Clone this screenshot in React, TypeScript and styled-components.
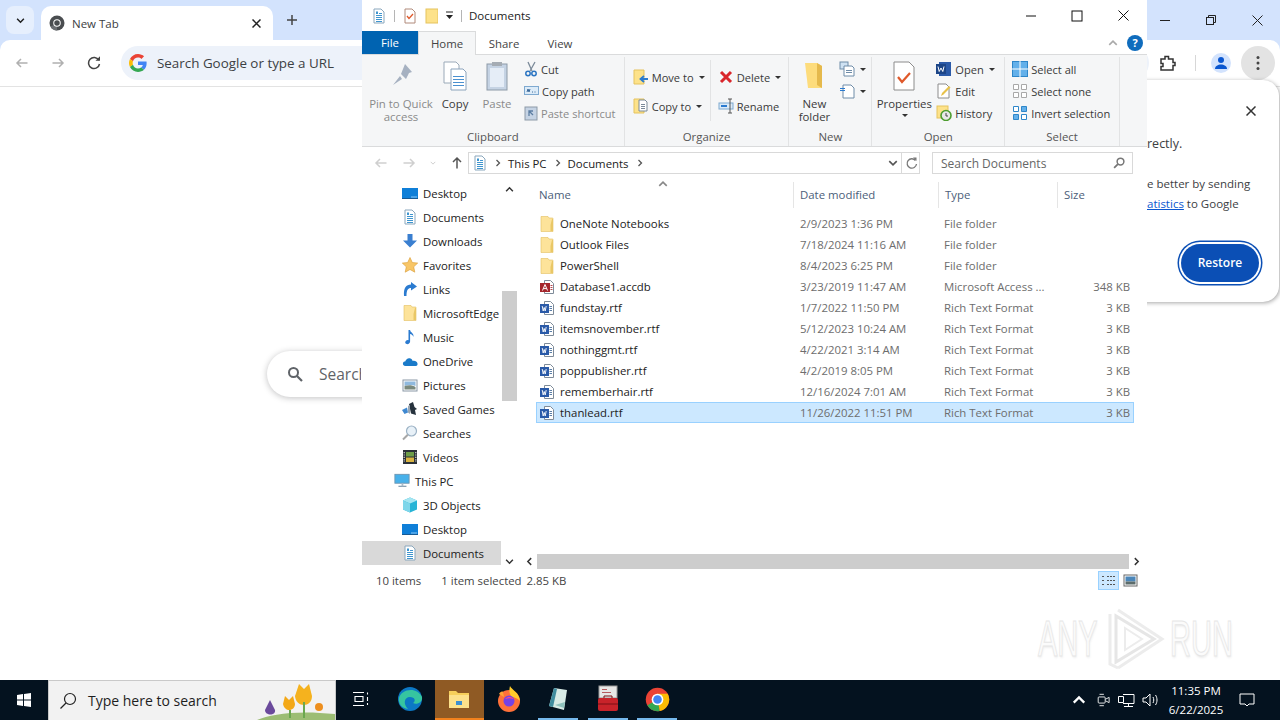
import React from "react";
import styled, { createGlobalStyle } from "styled-components";

const GlobalStyle = createGlobalStyle`
  html, body { margin: 0; padding: 0; background: #fff; overflow: hidden; }
  * { box-sizing: border-box; }
  body { font-family: "Open Sans", "Noto Sans", "Liberation Sans", sans-serif; color: #1a1a1a; }
`;

const Desktop = styled.div`
  position: relative;
  width: 1280px;
  height: 720px;
  display: flex;
  flex-direction: column;
  overflow: hidden;
`;

/* ---------- chrome behind ---------- */
const ChromeWindow = styled.div`
  flex: 1;
  display: flex;
  flex-direction: column;
  position: relative;
  background: #d3e3fd;
`;
const TabStrip = styled.div`
  height: 40px;
  display: flex;
  align-items: flex-start;
  padding: 6px 0 0 6px;
`;
const TabSearch = styled.div`
  width: 28px;
  height: 28px;
  margin-right: 7px;
  border-radius: 8px;
  background: #e6effd;
  display: flex;
  align-items: center;
  justify-content: center;
`;
const ActiveTab = styled.div`
  width: 232px;
  height: 34px;
  margin-right: 5px;
  background: #fff;
  border-radius: 10px 10px 0 0;
  display: flex;
  align-items: center;
  padding: 0 12px 0 8px;
  gap: 7px;
  font-size: 11.5px;
  color: #3c4043;
`;
const TabTitle = styled.span`
  flex: 1;
`;
const NewTab = styled.div`
  width: 28px;
  height: 28px;
  display: flex;
  align-items: center;
  justify-content: center;
`;
const WinControls = styled.div`
  margin-left: auto;
  margin-top: -6px;
  display: flex;
  align-items: center;
  height: 40px;
  gap: 30px;
  padding-right: 15px;
`;
const CaptionBtn = styled.div`
  width: 16px;
  display: flex;
  align-items: center;
  justify-content: center;
`;
const Toolbar = styled.div`
  height: 47px;
  background: #fff;
  border-radius: 10px 10px 0 0;
  display: flex;
  align-items: center;
  border-bottom: 1px solid #e3e3e3;
  padding: 0 5px 0 15px;
`;
const NavIcons = styled.div`
  display: flex;
  gap: 22px;
  align-items: center;
  width: 106px;
`;
const Omnibox = styled.div`
  flex: 1;
  height: 34px;
  border-radius: 17px;
  background: #edf2fa;
  display: flex;
  align-items: center;
  padding-left: 8px;
  gap: 10px;
  font-size: 13.4px;
  color: #3c4043;
`;
const ToolbarRight = styled.div`
  display: flex;
  align-items: center;
  margin-left: 10px;
`;
const ToolDivider = styled.div`
  width: 1px;
  height: 16px;
  margin: 0 15px 0 18px;
  background: #d7d7d7;
`;
const Avatar = styled.div`
  width: 20px;
  height: 20px;
  margin-right: 10px;
  border-radius: 50%;
  background: #d3e3fd;
  display: flex;
  align-items: center;
  justify-content: center;
`;
const MenuButton = styled.div`
  width: 34px;
  height: 34px;
  border-radius: 50%;
  background: #e3e3e3;
  display: flex;
  align-items: center;
  justify-content: center;
`;
const NtpPage = styled.div`
  flex: 1;
  background: #fff;
  padding: 264px 0 0 267px;
`;
const NtpSearch = styled.div`
  width: 500px;
  height: 46px;
  border-radius: 23px;
  background: #fff;
  box-shadow: 0 1px 6px rgba(32, 33, 36, 0.28);
  display: flex;
  align-items: center;
  padding-left: 20px;
  gap: 16px;
  font-size: 15.5px;
  color: #5f6368;
`;
const NtpText = styled.span`
  width: 42px;
  overflow: hidden;
  white-space: nowrap;
`;
const RestoreBubble = styled.div`
  position: absolute;
  left: 1000px;
  top: 80px;
  width: 279px;
  height: 222px;
  background: #fff;
  border-radius: 0 16px 16px 0;
  box-shadow: 1px 1px 4px rgba(0, 0, 0, 0.35);
  padding: 54px 0 0 147px;
  font-size: 11.5px;
  color: #3c4043;
  line-height: 20px;
`;
const BubbleClose = styled.div`
  position: absolute;
  right: 23px;
  top: 26px;
`;
const BubbleLead = styled.div`
  font-size: 12.5px;
  margin-bottom: 20px;
`;
const BubbleLink = styled.span`
  color: #0b57d0;
  text-decoration: underline;
`;
const RestoreBtn = styled.div`
  position: absolute;
  left: 181px;
  top: 164px;
  width: 78px;
  height: 38px;
  border-radius: 19px;
  background: #0b4fb5;
  color: #fff;
  font-weight: 600;
  font-size: 12px;
  display: flex;
  align-items: center;
  justify-content: center;
  box-shadow: 0 0 0 2px #fff, 0 0 0 3.5px #0b4fb5;
`;

/* ---------- explorer ---------- */
const Explorer = styled.div`
  position: absolute;
  left: 362px;
  top: 0;
  width: 785px;
  height: 595px;
  background: #fff;
  display: flex;
  flex-direction: column;
  font-size: 11.4px;
`;
const TitleBar = styled.div`
  height: 31px;
  display: flex;
  align-items: center;
  padding-left: 9px;
  gap: 7px;
`;
const QuickSep = styled.div`
  width: 1px;
  height: 12px;
  background: #b5b5b5;
`;
const TitleText = styled.span`
  flex: 1;
  font-size: 11.5px;
  color: #222;
`;
const CaptionBtns = styled.div`
  display: flex;
  gap: 30px;
  padding-right: 16px;
  align-items: center;
`;
const TabsRow = styled.div`
  height: 23px;
  display: flex;
  align-items: stretch;
`;
const FileTab = styled.div`
  width: 56px;
  background: #0063b1;
  color: #fff;
  display: flex;
  align-items: center;
  justify-content: center;
`;
const RibbonTab = styled.div<{ $active?: boolean }>`
  width: ${(p) => (p.$active ? "58px" : "56px")};
  display: flex;
  align-items: center;
  justify-content: center;
  color: #444;
  background: ${(p) => (p.$active ? "#f5f6f7" : "transparent")};
  border: 1px solid ${(p) => (p.$active ? "#dadbdc" : "transparent")};
  border-bottom: none;
  margin-bottom: ${(p) => (p.$active ? "-1px" : "0")};
  z-index: 1;
`;
const TabsEnd = styled.div`
  margin-left: auto;
  display: flex;
  align-items: center;
  gap: 9px;
  padding-right: 4px;
`;
const HelpDot = styled.div`
  width: 16px;
  height: 16px;
  border-radius: 50%;
  background: #0f6cbd;
  color: #fff;
  font-weight: 700;
  font-size: 11px;
  display: flex;
  align-items: center;
  justify-content: center;
`;
const Ribbon = styled.div`
  height: 93px;
  background: #f5f6f7;
  border-top: 1px solid #dadbdc;
  border-bottom: 1px solid #dadbdc;
  display: flex;
  padding-right: 27px;
`;
const Group = styled.div<{ $w: number }>`
  width: ${(p) => p.$w}px;
  border-right: 1px solid #e2e3e4;
  display: flex;
  flex-direction: column;
  margin-top: 2px;
`;
const GroupBody = styled.div<{ $inset?: number }>`
  flex: 1;
  min-height: 0;
  display: flex;
  padding: 1px 0 0 ${(p) => p.$inset ?? 0}px;
`;
const GroupLabel = styled.div`
  height: 17px;
  text-align: center;
  color: #555;
  font-size: 11.4px;
  line-height: 16px;
`;
const BigBtn = styled.div<{ $w: number; $dim?: boolean }>`
  width: ${(p) => p.$w}px;
  flex: none;
  display: flex;
  flex-direction: column;
  align-items: center;
  text-align: center;
  font-size: 11.4px;
  line-height: 13px;
  color: ${(p) => (p.$dim ? "#8a8a8a" : "#3a3a3a")};
`;
const BigIcon = styled.div`
  height: 36px;
  display: flex;
  align-items: center;
  justify-content: center;
  margin-bottom: 3px;
`;
const SmallCol = styled.div<{ $gap?: number; $pad?: number; $w?: number; $inset?: number }>`
  display: flex;
  flex-direction: column;
  gap: ${(p) => p.$gap ?? 0}px;
  padding: ${(p) => p.$pad ?? 0}px 0 0 ${(p) => p.$inset ?? 0}px;
  width: ${(p) => (p.$w ? `${p.$w}px` : "auto")};
`;
const SmallBtn = styled.div<{ $dim?: boolean }>`
  height: 22px;
  display: flex;
  align-items: center;
  gap: 3px;
  white-space: nowrap;
  font-size: 11.1px;
  color: ${(p) => (p.$dim ? "#8a8a8a" : "#3a3a3a")};
`;
const Caret = styled.span<{ $top?: number }>`
  width: 0;
  height: 0;
  border-left: 3px solid transparent;
  border-right: 3px solid transparent;
  border-top: 3px solid #333;
  display: inline-block;
  margin: ${(p) => p.$top ?? 0}px 0 0 2px;
`;
const VSep = styled.div`
  width: 1px;
  margin: 2px 7px 8px 0;
  background: #e2e3e4;
`;
const AddressRow = styled.div`
  height: 34px;
  display: flex;
  align-items: center;
  padding: 0 14px 2px 12px;
`;
const AddrNav = styled.div`
  display: flex;
  align-items: center;
  gap: 14px;
  width: 94px;
`;
const AddressBox = styled.div`
  width: 452px;
  height: 22px;
  border: 1px solid #d9d9d9;
  display: flex;
  align-items: center;
  padding-left: 3px;
  gap: 6px;
  color: #222;
`;
const Crumb = styled.span<{ $after?: number }>`
  margin-right: ${(p) => p.$after ?? 0}px;
`;
const AddrEnd = styled.div`
  margin-left: auto;
  display: flex;
  align-items: center;
  height: 100%;
  gap: 3px;
  padding-right: 1px;
`;
const AddrDivider = styled.div`
  width: 1px;
  height: 100%;
  background: #d9d9d9;
`;
const SearchBox = styled.div`
  margin-left: auto;
  width: 201px;
  height: 22px;
  border: 1px solid #d9d9d9;
  display: flex;
  align-items: center;
  justify-content: space-between;
  padding: 0 7px 0 8px;
  color: #666;
  font-size: 12px;
`;
const Body = styled.div`
  height: 389px;
  display: flex;
`;
const NavPane = styled.div`
  width: 139px;
  overflow: hidden;
`;
const NavRow = styled.div<{ $selected?: boolean; $level: number }>`
  height: 24px;
  display: flex;
  align-items: center;
  gap: 5px;
  padding-left: ${(p) => (p.$level === 1 ? 32 : 40)}px;
  white-space: nowrap;
  color: #222;
  background: ${(p) => (p.$selected ? "#d9d9d9" : "transparent")};
`;
const VScroll = styled.div`
  width: 17px;
  display: flex;
  flex-direction: column;
  align-items: center;
`;
const ScrollEnd = styled.div`
  height: 17px;
  width: 100%;
  display: flex;
  align-items: center;
  justify-content: center;
  background: #fff;
`;
const VTrack = styled.div`
  flex: 1;
  width: 100%;
  padding-top: 93px;
  background: #fff;
`;
const VThumb = styled.div`
  height: 110px;
  margin: 0 1px;
  background: #cdcdcd;
`;
const ListPane = styled.div`
  flex: 1;
  display: flex;
  flex-direction: column;
  padding-left: 6px;
`;
const ListHead = styled.div`
  height: 32px;
  display: grid;
  grid-template-columns: 270px 145px 119px 1fr;
  position: relative;
`;
const HeadCell = styled.div<{ $first?: boolean; $last?: boolean }>`
  display: flex;
  align-items: center;
  padding: 0 0 1px ${(p) => (p.$first ? 15 : 6)}px;
  height: 26px;
  margin-top: 1px;
  color: #4c607a;
  font-size: 11.4px;
  border-right: 1px solid ${(p) => (p.$last ? "transparent" : "#e5e5e5")};
`;
const SortMark = styled.div`
  position: absolute;
  left: 134px;
  top: -2px;
`;
const Rows = styled.div`
  flex: 1;
  padding: 0 13px 0 12px;
`;
const Row = styled.div<{ $selected?: boolean }>`
  height: 21px;
  display: grid;
  grid-template-columns: 264px 144px 120px 1fr;
  align-items: center;
  background: ${(p) => (p.$selected ? "#cce8ff" : "transparent")};
  outline: ${(p) => (p.$selected ? "1px solid #99d1ff" : "none")};
  outline-offset: -1px;
  color: #222;
`;
const NameCell = styled.div`
  display: flex;
  align-items: center;
  gap: 5px;
  padding-left: 3px;
  white-space: nowrap;
`;
const DimCell = styled.div`
  color: #6d6d6d;
  white-space: nowrap;
`;
const SizeCell = styled(DimCell)`
  text-align: right;
  padding-right: 4px;
`;
const HScroll = styled.div`
  height: 17px;
  display: flex;
  align-items: center;
  margin-left: -1px;
  padding-right: 4px;
`;
const HEnd = styled.div`
  width: 13px;
  display: flex;
  align-items: center;
  justify-content: center;
`;
const HThumb = styled.div`
  flex: 1;
  height: 15px;
  margin: 0 1px;
  background: #cdcdcd;
`;
const StatusBar = styled.div`
  height: 21px;
  display: flex;
  align-items: center;
  padding-left: 14px;
  color: #444;
`;
const StatusGap = styled.span<{ $w: number }>`
  width: ${(p) => p.$w}px;
  flex: none;
`;
const ViewBtns = styled.div`
  margin-left: auto;
  display: flex;
  align-items: center;
  gap: 1px;
  padding-right: 6px;
`;
const ViewBtn = styled.div<{ $on?: boolean }>`
  width: 21px;
  height: 19px;
  display: flex;
  align-items: center;
  justify-content: center;
  background: ${(p) => (p.$on ? "#cce8ff" : "transparent")};
  border: 1px solid ${(p) => (p.$on ? "#99d1ff" : "transparent")};
`;

/* ---------- taskbar ---------- */
const Taskbar = styled.div`
  height: 40px;
  background: #04121f;
  display: flex;
  align-items: stretch;
  color: #fff;
`;
const StartBtn = styled.div`
  width: 48px;
  display: flex;
  align-items: center;
  justify-content: center;
`;
const TaskSearch = styled.div`
  width: 288px;
  background: #f2f2f2;
  border: 1px solid #c9c9c9;
  border-bottom: none;
  display: flex;
  align-items: center;
  padding-left: 10px;
  gap: 11px;
  color: #1e1e1e;
  font-size: 14px;
  position: relative;
  overflow: hidden;
`;
const SearchArt = styled.div`
  position: absolute;
  right: 0;
  bottom: 0;
  height: 40px;
`;
const TaskItem = styled.div<{ $active?: boolean; $running?: boolean }>`
  width: 49.4px;
  display: flex;
  align-items: center;
  justify-content: center;
  background-color: ${(p) => (p.$active ? "#8f5a24" : "transparent")};
  background-image: ${(p) => (p.$running ? "linear-gradient(#76b9ed, #76b9ed)" : "none")};
  background-size: 40px 2px;
  background-position: center bottom;
  background-repeat: no-repeat;
  border-bottom: 2px solid ${(p) => (p.$active ? "#f2811d" : "transparent")};
  background-clip: ${(p) => (p.$running ? "border-box" : "padding-box")};
  background-origin: border-box;
`;
const Tray = styled.div`
  margin-left: auto;
  display: flex;
  align-items: center;
  padding-right: 14px;
`;
const TrayIcons = styled.div`
  display: flex;
  align-items: center;
  gap: 7px;
  padding-right: 4px;
`;
const TrayChevron = styled.div`
  margin-right: 3px;
  display: flex;
`;
const Clock = styled.div`
  width: 64px;
  text-align: center;
  font-size: 11.5px;
  line-height: 19px;
`;
const Notify = styled.div`
  width: 38px;
  display: flex;
  align-items: center;
  justify-content: center;
`;
const Watermark = styled.div`
  position: absolute;
  left: 1038px;
  top: 608px;
  display: flex;
  align-items: center;
  font-family: "Liberation Sans", sans-serif;
  font-size: 50px;
  color: #fbfbfb;
  -webkit-text-stroke: 1px #e6e6e6;
  text-shadow: 1px 2px 3px rgba(0, 0, 0, 0.07);
`;
const WmWord = styled.span<{ $w: number; $lead?: number }>`
  display: inline-block;
  width: ${(p) => p.$w}px;
  margin-left: ${(p) => p.$lead ?? 0}px;
  white-space: nowrap;
  transform: scaleX(0.58);
  transform-origin: left center;
`;

/* ---------- icons ---------- */
const S = ({ w = 16, h = 16, vb, children }: { w?: number; h?: number; vb?: string; children: React.ReactNode }) => (
  <svg width={w} height={h} viewBox={vb ?? `0 0 ${w} ${h}`} style={{ flex: "none", display: "block" }}>
    {children}
  </svg>
);
const Folder = () => (
  <S>
    <path d="M2 .5h7l1 1.500h3.500a.5.5 0 0 1 .5.5v13H2z" fill="#fde39a" stroke="#e3c05f" strokeWidth=".6" />
    <path d="M11.500 9v6H14V3l-1 0z" fill="#e9c766" />
  </S>
);
const DocBlue = () => (
  <S>
    <path d="M3 1h7l3 3v11H3z" fill="#fff" stroke="#8aa7bd" />
    <path d="M8 5.500h3M5 7.500h6M5 9.500h6M5 11.500h6M5 13.500h6" stroke="#3e95cf" strokeWidth="1" />
    <rect x="5" y="3.500" width="2" height="2.500" fill="#3e95cf" />
  </S>
);
const WordDoc = () => (
  <S>
    <path d="M5.500 1.500h6l3 3v10h-9z" fill="#fff" stroke="#7e8b99" />
    <path d="M10.500 6.500h2.500M10.500 8.500h2.500M10.500 10.500h2.500" stroke="#5b7ea6" />
    <rect x="1" y="4" width="9" height="9" fill="#2a5aa8" />
    <path d="M2.500 6l1 5 1-3.500 1 3.500 1-5" transform="translate(.7 0)" stroke="#fff" fill="none" strokeWidth=".9" />
  </S>
);
const AccessDoc = () => (
  <S>
    <path d="M5.500 1.500h6l3 3v10h-9z" fill="#fff" stroke="#7e8b99" />
    <path d="M11.500 6.500h2M11.500 8.500h2M11.500 10.500h2" stroke="#b9474f" />
    <rect x="1" y="4" width="10" height="9" fill="#a4262c" />
    <path d="M3.500 11.500L6 5.500l2.500 6M4.400 9.600h3.200" stroke="#fff" fill="none" strokeWidth="1" />
  </S>
);
const DesktopIcon = () => (
  <S>
    <rect x="0" y="3" width="16" height="10" fill="#0f7fd8" />
    <path d="M0 13h16v1H0z" fill="#175a94" />
    <path d="M9 12h6" stroke="#8cc9f5" />
  </S>
);
const Download = () => (
  <S>
    <path d="M5.500 1h5v6.500H15L8 14.500 1 7.500h4.500z" fill="#3a7fd0" />
  </S>
);
const Star = () => (
  <S>
    <path d="M8 .5l2.300 5 5.400.6-4 3.700 1.100 5.400L8 12.500l-4.800 2.700 1.100-5.400-4-3.700 5.400-.6z" fill="#f8c667" stroke="#d89a33" strokeWidth=".6" />
  </S>
);
const LinkIcon = () => (
  <S>
    <path d="M9 1l6 4.500-6 4V7C6 7 4.500 9 4.500 15H2C1.500 7 4 3.600 9 3.600z" fill="#2b7bd0" />
  </S>
);
const Music = () => (
  <S>
    <path d="M6.500 1h1.600c.3 2.600 4 3 3.400 7-.6-1.800-2-2.800-3.400-3V12.500c0 1.600-1.600 3-3.400 2.600S2.800 13 4 11.800c.8-.8 1.800-.9 2.500-.6z" fill="#2b7bd0" />
  </S>
);
const Cloud = () => (
  <S>
    <path d="M3.500 13C1.500 13 .5 11.500 1 10c.4-1.200 1.500-1.600 2.200-1.500C4 6 6.200 4.500 8.500 5.500c1.500.6 2 1.800 2.200 2.500 2-.5 4.300.3 4.800 2.500.3 1.500-.5 2.500-1.500 2.500z" fill="#1a7ac9" />
  </S>
);
const Pictures = () => (
  <S>
    <rect x="1" y="3" width="14" height="11" fill="#fff" stroke="#8a98a6" />
    <path d="M2.500 4.500h11v4.500c-3-1.500-7-1.500-11 0z" fill="#8fb9de" />
    <path d="M2.500 9c4-1.500 8-1 11 1v2.500h-11z" fill="#7b8a7e" />
  </S>
);
const Games = () => (
  <S>
    <path d="M0 9l5-2.500 1 5-3.500 1.500z" fill="#3f88d0" />
    <path d="M7 3l4-2 1.500 5 2.500 2-2 1 1 5-5-1.500z" fill="#26323d" />
    <path d="M6 5l2-1v9l-2-1.500z" fill="#9aa7b3" />
  </S>
);
const Searches = () => (
  <S>
    <circle cx="9.500" cy="6" r="5" fill="#e8f1f8" stroke="#9cb2c5" strokeWidth="1.200" />
    <path d="M5.800 9.800L1 14.500" stroke="#a7a7a7" strokeWidth="2" />
  </S>
);
const Videos = () => (
  <S>
    <rect x="1" y="1" width="14" height="14" fill="#2b3138" />
    <rect x="4" y="3" width="8" height="4.500" fill="#6d9d48" />
    <rect x="4" y="8.500" width="8" height="4.500" fill="#d8b342" />
    <path d="M2.200 3v10M13.800 3v10" stroke="#d6d6d6" strokeDasharray="1.200 1.200" strokeWidth="1.200" />
  </S>
);
const PcIcon = () => (
  <S w={16} h={16} vb="0 0 18 18">
    <rect x="1" y="1.500" width="16" height="10" fill="#48b1ea" stroke="#6c95b1" />
    <path d="M5 15h9" stroke="#8aa1b2" strokeWidth="1.500" />
    <path d="M8.500 11.500h2V15h-2z" fill="#a8bac8" />
  </S>
);
const Cube = () => (
  <S>
    <path d="M8 .5L15 3.500v9L8 15.500 1 12.500v-9z" fill="#27b4d6" />
    <path d="M8 6.500L15 3.500 8 .5 1 3.500z" fill="#a6e6f2" />
    <path d="M1 3.500L8 6.500v9L1 12.500z" fill="#7ed6ea" />
  </S>
);
const Arrow = ({ dir, color }: { dir: "l" | "r" | "u"; color: string }) => {
  const r = dir === "l" ? 180 : dir === "u" ? -90 : 0;
  return (
    <S w={14} h={14}>
      <g transform={`rotate(${r} 7 7)`} stroke={color} strokeWidth="1.500" fill="none">
        <path d="M1.500 7h10.500M8 3l4 4-4 4" />
      </g>
    </S>
  );
};
const Chevron = ({ dir, color = "#444", size = 8 }: { dir: "l" | "r" | "u" | "d"; color?: string; size?: number }) => {
  const r = { r: 0, d: 90, l: 180, u: -90 }[dir];
  return (
    <S w={size} h={size} vb="0 0 8 8">
      <path d="M2.500 1l3 3-3 3" transform={`rotate(${r} 4 4)`} stroke={color} strokeWidth="1.300" fill="none" />
    </S>
  );
};
const ChromeLogo = ({ size = 16, mono }: { size?: number; mono?: boolean }) => (
  <S w={size} h={size} vb="0 0 32 32">
    <circle cx="16" cy="16" r="15" fill={mono ? "#4a4d50" : "#ea4335"} />
    {mono && <path d="M16 16L3 23.500A15 15 0 0 0 16 31z" fill="#6b6e72" />}
    {!mono && <path d="M16 16L3 23.500A15 15 0 0 0 16 31c1 0 2 0 3-.3z" fill="#34a853" />}
    {!mono && <path d="M16 16l3 14.700A15 15 0 0 0 29 8.500H16z" fill="#fbbc04" />}
    <circle cx="16" cy="16" r="7.500" fill="#fff" />
    <circle cx="16" cy="16" r="5.500" fill={mono ? "#4a4d50" : "#4285f4"} />
  </S>
);
const GoogleG = () => (
  <S w={18} h={18} vb="0 0 48 48">
    <path fill="#ea4335" d="M24 9.500c3.500 0 6.700 1.200 9.200 3.600l6.900-6.900C35.900 2.400 30.500 0 24 0 14.600 0 6.500 5.400 2.600 13.200l8 6.200C12.400 13.700 17.700 9.500 24 9.500z" />
    <path fill="#4285f4" d="M47 24.500c0-1.600-.1-3.100-.4-4.500H24v9h12.900c-.6 3-2.300 5.500-4.800 7.200l7.700 6C44.300 38 47 31.800 47 24.500z" />
    <path fill="#fbbc05" d="M10.600 28.600c-.5-1.400-.8-3-.8-4.600s.3-3.200.8-4.600l-8-6.200C.9 16.500 0 20.100 0 24s.9 7.500 2.600 10.800z" />
    <path fill="#34a853" d="M24 48c6.500 0 11.900-2.100 15.900-5.800l-7.700-6c-2.200 1.500-5 2.300-8.200 2.300-6.300 0-11.600-4.200-13.400-9.900l-8 6.200C6.500 42.600 14.600 48 24 48z" />
  </S>
);
const Close = ({ size = 10, color = "#333", sw = 1.2 }: { size?: number; color?: string; sw?: number }) => (
  <S w={size} h={size}>
    <path d={`M.5 .5L${size - 0.5} ${size - 0.5}M${size - 0.5} .5L.5 ${size - 0.5}`} stroke={color} strokeWidth={sw} />
  </S>
);
const Magnifier = ({ size = 16, color = "#666" }: { size?: number; color?: string }) => (
  <S w={size} h={size} vb="0 0 16 16">
    <circle cx="6.500" cy="6.500" r="4.500" fill="none" stroke={color} strokeWidth="2" />
    <path d="M10 10l5 5" stroke={color} strokeWidth="2.200" />
  </S>
);

const navItems: [string, React.ReactNode][] = [
  ["Desktop", <DesktopIcon />],
  ["Documents", <DocBlue />],
  ["Downloads", <Download />],
  ["Favorites", <Star />],
  ["Links", <LinkIcon />],
  ["MicrosoftEdge", <Folder />],
  ["Music", <Music />],
  ["OneDrive", <Cloud />],
  ["Pictures", <Pictures />],
  ["Saved Games", <Games />],
  ["Searches", <Searches />],
  ["Videos", <Videos />],
];

const files: { name: string; date: string; type: string; size?: string; icon: React.ReactNode; selected?: boolean }[] = [
  { name: "OneNote Notebooks", date: "2/9/2023 1:36 PM", type: "File folder", icon: <Folder /> },
  { name: "Outlook Files", date: "7/18/2024 11:16 AM", type: "File folder", icon: <Folder /> },
  { name: "PowerShell", date: "8/4/2023 6:25 PM", type: "File folder", icon: <Folder /> },
  { name: "Database1.accdb", date: "3/23/2019 11:47 AM", type: "Microsoft Access ...", size: "348 KB", icon: <AccessDoc /> },
  { name: "fundstay.rtf", date: "1/7/2022 11:50 PM", type: "Rich Text Format", size: "3 KB", icon: <WordDoc /> },
  { name: "itemsnovember.rtf", date: "5/12/2023 10:24 AM", type: "Rich Text Format", size: "3 KB", icon: <WordDoc /> },
  { name: "nothinggmt.rtf", date: "4/22/2021 3:14 AM", type: "Rich Text Format", size: "3 KB", icon: <WordDoc /> },
  { name: "poppublisher.rtf", date: "4/2/2019 8:05 PM", type: "Rich Text Format", size: "3 KB", icon: <WordDoc /> },
  { name: "rememberhair.rtf", date: "12/16/2024 7:01 AM", type: "Rich Text Format", size: "3 KB", icon: <WordDoc /> },
  { name: "thanlead.rtf", date: "11/26/2022 11:51 PM", type: "Rich Text Format", size: "3 KB", icon: <WordDoc />, selected: true },
];

function ExplorerWindow() {
  return (
    <Explorer>
      <TitleBar>
        <DocBlue />
        <QuickSep />
        <S>
          <path d="M3 1h7l3 3v11H3z" fill="#fff" stroke="#b08a7a" />
          <path d="M5 8l2 2.500L11 6" stroke="#e0592a" strokeWidth="1.300" fill="none" />
        </S>
        <S w={13}>
          <rect x="1" y="1" width="12" height="14" fill="#fde28a" stroke="#e5c35f" />
        </S>
        <S w={9} h={9}>
          <path d="M1 1h7" stroke="#222" />
          <path d="M1 4h7L4.500 8z" fill="#222" />
        </S>
        <QuickSep />
        <TitleText>Documents</TitleText>
        <CaptionBtns>
          <CaptionBtn>
            <S w={16} h={10}>
              <path d="M3 5h10" stroke="#111" />
            </S>
          </CaptionBtn>
          <CaptionBtn>
            <S w={12} h={12}>
              <rect x="1" y="1" width="10" height="10" fill="none" stroke="#111" />
            </S>
          </CaptionBtn>
          <CaptionBtn>
            <Close size={11} color="#111" sw={1} />
          </CaptionBtn>
        </CaptionBtns>
      </TitleBar>
      <TabsRow>
        <FileTab>File</FileTab>
        <RibbonTab $active>Home</RibbonTab>
        <RibbonTab>Share</RibbonTab>
        <RibbonTab>View</RibbonTab>
        <TabsEnd>
          <Chevron dir="u" color="#aaa" size={10} />
          <HelpDot>?</HelpDot>
        </TabsEnd>
      </TabsRow>
      <Ribbon>
        <Group $w={263}>
          <GroupBody>
            <BigBtn $w={78} $dim>
              <BigIcon>
                <S w={26} h={30}>
                  <path d="M17 3l7 8-3 1-3 6-5-5zM12 15l-7 9 9-6z" fill="#a6b1c1" />
                </S>
              </BigIcon>
              Pin to Quick access
            </BigBtn>
            <BigBtn $w={30}>
              <BigIcon>
                <S w={26} h={30}>
                  <path d="M2 1h12l3 3v18H2z" fill="#fff" stroke="#9aa9b8" />
                  <path d="M9 8h12l3 3v18H9z" fill="#fff" stroke="#8ba3bc" />
                  <path d="M11 15.500h11M11 18.500h11M11 21.500h11M11 24.500h11" stroke="#4a90d0" />
                </S>
              </BigIcon>
              Copy
            </BigBtn>
            <BigBtn $w={54} $dim>
              <BigIcon>
                <S w={24} h={30}>
                  <rect x="2" y="3" width="20" height="26" fill="#c5d3e4" stroke="#8d9aa8" />
                  <rect x="5" y="7" width="14" height="19" fill="#e5edf7" />
                  <rect x="7" y="1" width="10" height="4" fill="#a5acb4" />
                </S>
              </BigIcon>
              Paste
            </BigBtn>
            <SmallCol>
              <SmallBtn>
                <S w={14} h={16}>
                  <path d="M4 1l4 9M11 1L6 10" stroke="#7b8a99" strokeWidth="1.300" />
                  <circle cx="4" cy="12.500" r="2.200" fill="none" stroke="#2c75c2" strokeWidth="1.500" />
                  <circle cx="10" cy="12.500" r="2.200" fill="none" stroke="#2c75c2" strokeWidth="1.500" />
                </S>
                Cut
              </SmallBtn>
              <SmallBtn>
                <S w={15} h={10}>
                  <rect x=".5" y=".5" width="14" height="8" fill="#dcebf8" stroke="#7ea9d0" />
                  <path d="M3 6l1-3 1 3 1-3M8 6h1M10.500 6h1" stroke="#2b5d92" strokeWidth=".9" fill="none" />
                </S>
                Copy path
              </SmallBtn>
              <SmallBtn $dim>
                <S w={14} h={16}>
                  <rect x="1" y="2" width="12" height="13" fill="#c5d3e4" stroke="#8d9aa8" />
                  <path d="M5 11V6h4M5 6l4 4" stroke="#5c7ea2" strokeWidth="1.300" fill="none" />
                </S>
                Paste shortcut
              </SmallBtn>
            </SmallCol>
          </GroupBody>
          <GroupLabel>Clipboard</GroupLabel>
        </Group>
        <Group $w={165}>
          <GroupBody>
            <SmallCol $gap={7} $pad={8} $w={85} $inset={8}>
              <SmallBtn>
                <S>
                  <path d="M1 1h10v14H1z" fill="#fde28a" stroke="#e5c35f" />
                  <path d="M15 10H8M11 7l-3.500 3 3.500 3" stroke="#2b7bd0" strokeWidth="1.800" fill="none" />
                </S>
                Move to
                <Caret />
              </SmallBtn>
              <SmallBtn>
                <S>
                  <path d="M1 1h10v14H1z" fill="#fde28a" stroke="#e5c35f" />
                  <path d="M6 2h6l2 2v9H6z" fill="#fff" stroke="#7b8a99" />
                  <path d="M8 6.500h4M8 8.500h4M8 10.500h4" stroke="#7b8a99" />
                </S>
                Copy to
                <Caret />
              </SmallBtn>
            </SmallCol>
            <VSep />
            <SmallCol $gap={7} $pad={8}>
              <SmallBtn>
                <S>
                  <path d="M3 3l10 10M13 3L3 13" stroke="#d9262b" strokeWidth="3" />
                </S>
                Delete
                <Caret />
              </SmallBtn>
              <SmallBtn>
                <S>
                  <rect x="1" y="5" width="14" height="6" fill="#dcebf8" stroke="#7ea9d0" />
                  <rect x="3" y="7" width="6" height="2" fill="#2b7bd0" />
                  <path d="M12 1v14M10 1h4M10 15h4" stroke="#555" />
                </S>
                Rename
              </SmallBtn>
            </SmallCol>
          </GroupBody>
          <GroupLabel>Organize</GroupLabel>
        </Group>
        <Group $w={83}>
          <GroupBody>
            <BigBtn $w={50}>
              <BigIcon>
                <S w={24} h={30}>
                  <path d="M3 2h12l5 3v22H6z" fill="#fddc7c" />
                  <path d="M15 2l5 3v22l-5-3z" fill="#e5b94c" />
                </S>
              </BigIcon>
              New folder
            </BigBtn>
            <SmallCol>
              <SmallBtn>
                <S>
                  <rect x="1" y="1" width="8" height="7" fill="#cfe2f3" stroke="#6f8ca8" />
                  <path d="M5 5h8l2 2v8H5z" fill="#fff" stroke="#6f8ca8" />
                  <path d="M7 9.500h6M7 11.500h6" stroke="#6f8ca8" />
                </S>
                <Caret />
              </SmallBtn>
              <SmallBtn>
                <S>
                  <path d="M4 2h8l3 3v10H4z" fill="#fff" stroke="#6f8ca8" />
                  <path d="M1 5.500h5M1 7.500h5" stroke="#2b7bd0" />
                </S>
                <Caret />
              </SmallBtn>
            </SmallCol>
          </GroupBody>
          <GroupLabel>New</GroupLabel>
        </Group>
        <Group $w={133}>
          <GroupBody>
            <BigBtn $w={64}>
              <BigIcon>
                <S w={24} h={30}>
                  <path d="M2 1h15l5 5v23H2z" fill="#fff" stroke="#8c8c8c" />
                  <path d="M6 16l4 5 8-9" stroke="#e0592a" strokeWidth="2.200" fill="none" />
                </S>
              </BigIcon>
              Properties
              <Caret $top={4} />
            </BigBtn>
            <SmallCol>
              <SmallBtn>
                <S>
                  <rect x="3" y="1" width="12" height="14" fill="#2b5aa8" />
                  <rect x="0" y="3" width="10" height="10" fill="#1c4587" />
                  <path d="M2 5.500l1.200 5L5 7l1.800 3.500L8 5.500" stroke="#fff" fill="none" />
                </S>
                Open
                <Caret />
              </SmallBtn>
              <SmallBtn>
                <S>
                  <path d="M2 1h8l3 3v11H2z" fill="#fff" stroke="#8c8c8c" />
                  <path d="M5 13l1-3 7-7 1.500 1.500-7 7z" fill="#e8c24a" />
                </S>
                Edit
              </SmallBtn>
              <SmallBtn>
                <S>
                  <rect x="1" y="1" width="11" height="12" fill="#fde28a" stroke="#e5c35f" />
                  <circle cx="10" cy="10.500" r="5" fill="#e8e8e8" stroke="#4d9d2f" strokeWidth="1.600" />
                  <path d="M10 8v3h2" stroke="#444" fill="none" />
                </S>
                History
              </SmallBtn>
            </SmallCol>
          </GroupBody>
          <GroupLabel>Open</GroupLabel>
        </Group>
        <Group $w={115}>
          <GroupBody $inset={7}>
            <SmallCol>
              <SmallBtn>
                <S>
                  <rect x=".5" y=".5" width="15" height="15" fill="#63b0ea" stroke="#2e86c9" />
                  <path d="M8 0v16M0 8h16" stroke="#fff" />
                </S>
                Select all
              </SmallBtn>
              <SmallBtn>
                <S>
                  <path d="M1.500 1.500h5v5h-5zM9.500 1.500h5v5h-5zM1.500 9.500h5v5h-5zM9.500 9.500h5v5h-5z" fill="#fff" stroke="#a8a8a8" />
                </S>
                Select none
              </SmallBtn>
              <SmallBtn>
                <S>
                  <path d="M9.500 1.500h5v5h-5zM1.500 9.500h5v5h-5z" fill="#63b0ea" stroke="#2e86c9" />
                  <path d="M1.500 1.500h5v5h-5zM9.500 9.500h5v5h-5z" fill="#fff" stroke="#2e86c9" />
                </S>
                Invert selection
              </SmallBtn>
            </SmallCol>
          </GroupBody>
          <GroupLabel>Select</GroupLabel>
        </Group>
      </Ribbon>
      <AddressRow>
        <AddrNav>
          <Arrow dir="l" color="#cfcfcf" />
          <Arrow dir="r" color="#cfcfcf" />
          <Chevron dir="d" color="#cfcfcf" size={6} />
          <Arrow dir="u" color="#555" />
        </AddrNav>
        <AddressBox>
          <DocBlue />
          <Chevron dir="r" color="#555" size={8} />
          <Crumb $after={1}>This PC</Crumb>
          <Chevron dir="r" color="#555" size={8} />
          <Crumb $after={1}>Documents</Crumb>
          <Chevron dir="r" color="#555" size={8} />
          <AddrEnd>
            <Chevron dir="d" color="#555" size={10} />
            <AddrDivider />
            <S w={13} h={13}>
              <path d="M10.500 3.500A4.700 4.700 0 1 0 11.500 7" fill="none" stroke="#777" strokeWidth="1.300" />
              <path d="M8 .5l3.500 0v3.500z" fill="#777" />
            </S>
          </AddrEnd>
        </AddressBox>
        <SearchBox>
          Search Documents
          <S w={12} h={12} vb="0 0 16 16">
            <circle cx="10" cy="6" r="4.500" fill="none" stroke="#777" strokeWidth="2" />
            <path d="M6.500 9.500L1.500 14.500" stroke="#777" strokeWidth="2.400" />
          </S>
        </SearchBox>
      </AddressRow>
      <Body>
        <NavPane>
          {navItems.map(([label, icon]) => (
            <NavRow key={label} $level={2}>
              {icon}
              {label}
            </NavRow>
          ))}
          <NavRow $level={1}>
            <PcIcon />
            This PC
          </NavRow>
          <NavRow $level={2}>
            <Cube />
            3D Objects
          </NavRow>
          <NavRow $level={2}>
            <DesktopIcon />
            Desktop
          </NavRow>
          <NavRow $level={2} $selected>
            <DocBlue />
            Documents
          </NavRow>
        </NavPane>
        <VScroll>
          <ScrollEnd>
            <Chevron dir="u" color="#333" size={9} />
          </ScrollEnd>
          <VTrack>
            <VThumb />
          </VTrack>
          <ScrollEnd>
            <Chevron dir="d" color="#333" size={9} />
          </ScrollEnd>
        </VScroll>
        <ListPane>
          <ListHead>
            <HeadCell $first>Name</HeadCell>
            <HeadCell>Date modified</HeadCell>
            <HeadCell>Type</HeadCell>
            <HeadCell $last>Size</HeadCell>
            <SortMark>
              <Chevron dir="u" color="#888" size={10} />
            </SortMark>
          </ListHead>
          <Rows>
            {files.map((f) => (
              <Row key={f.name} $selected={f.selected}>
                <NameCell>
                  {f.icon}
                  {f.name}
                </NameCell>
                <DimCell>{f.date}</DimCell>
                <DimCell>{f.type}</DimCell>
                <SizeCell>{f.size}</SizeCell>
              </Row>
            ))}
          </Rows>
          <HScroll>
            <HEnd>
              <Chevron dir="l" color="#333" size={9} />
            </HEnd>
            <HThumb />
            <HEnd>
              <Chevron dir="r" color="#333" size={9} />
            </HEnd>
          </HScroll>
        </ListPane>
      </Body>
      <StatusBar>
        10 items
        <StatusGap $w={20} />
        1 item selected
        <StatusGap $w={5} />
        2.85 KB
        <ViewBtns>
          <ViewBtn $on>
            <S w={15} h={13}>
              <path d="M1 2.500h3M1 6.500h3M1 10.500h3M6 2.500h8M6 6.500h8M6 10.500h8" stroke="#555" strokeDasharray="2 1" />
            </S>
          </ViewBtn>
          <ViewBtn>
            <S w={15} h={13}>
              <rect x="1" y="1" width="13" height="11" fill="#fff" stroke="#666" />
              <rect x="2.500" y="2.500" width="10" height="5" fill="#4b86b9" />
              <rect x="2.500" y="7.500" width="10" height="3" fill="#5c6c6b" />
            </S>
          </ViewBtn>
        </ViewBtns>
      </StatusBar>
    </Explorer>
  );
}

export default function App() {
  return (
    <Desktop>
      <GlobalStyle />
      <ChromeWindow>
        <TabStrip>
          <TabSearch>
            <Chevron dir="d" color="#1f1f1f" size={9} />
          </TabSearch>
          <ActiveTab>
            <ChromeLogo mono />
            <TabTitle>New Tab</TabTitle>
            <Close size={9} color="#222" sw={1.5} />
          </ActiveTab>
          <NewTab>
            <S w={12} h={12}>
              <path d="M6 1v10M1 6h10" stroke="#444" strokeWidth="1.500" />
            </S>
          </NewTab>
          <WinControls>
            <CaptionBtn>
              <S w={10} h={10}>
                <path d="M0 5.500h10" stroke="#222" />
              </S>
            </CaptionBtn>
            <CaptionBtn>
              <S w={10} h={10}>
                <rect x=".5" y="2.500" width="7" height="7" fill="none" stroke="#222" />
                <path d="M2.500 2.500v-2h7v7h-2" fill="none" stroke="#222" />
              </S>
            </CaptionBtn>
            <CaptionBtn>
              <Close size={11} color="#222" sw={1} />
            </CaptionBtn>
          </WinControls>
        </TabStrip>
        <Toolbar>
          <NavIcons>
            <Arrow dir="l" color="#b0b0b0" />
            <Arrow dir="r" color="#b0b0b0" />
            <S w={14} h={14}>
              <path d="M11.800 4.200A5.500 5.500 0 1 0 12.500 8" fill="none" stroke="#444" strokeWidth="1.500" />
              <path d="M8.500 4.700h4.500V.2z" fill="#444" />
            </S>
          </NavIcons>
          <Omnibox>
            <GoogleG />
            Search Google or type a URL
          </Omnibox>
          <ToolbarRight>
            <S w={18} h={18}>
              <path d="M2 5h4V2.500h3.500V5H14v3.500h2v3h-2V16H2v-3.500h2v-3H2z" fill="none" stroke="#333" strokeWidth="1.500" />
            </S>
            <ToolDivider />
            <Avatar>
              <S w={14} h={14}>
                <circle cx="7" cy="4" r="3" fill="#0b57d0" />
                <path d="M1 13c0-3 3-4.500 6-4.500s6 1.500 6 4.500z" fill="#0b57d0" />
              </S>
            </Avatar>
            <MenuButton>
              <S w={4} h={16}>
                <circle cx="2" cy="2.500" r="1.500" fill="#444" />
                <circle cx="2" cy="8" r="1.500" fill="#444" />
                <circle cx="2" cy="13.500" r="1.500" fill="#444" />
              </S>
            </MenuButton>
          </ToolbarRight>
        </Toolbar>
        <NtpPage>
          <NtpSearch>
            <Magnifier size={16} color="#5f6368" />
            <NtpText>Search</NtpText>
          </NtpSearch>
        </NtpPage>
        <RestoreBubble>
          <BubbleClose>
            <Close size={10} color="#333" sw={1.5} />
          </BubbleClose>
          <BubbleLead>rectly.</BubbleLead>
          <div>e better by sending</div>
          <div>
            <BubbleLink>atistics</BubbleLink> to Google
          </div>
          <RestoreBtn>Restore</RestoreBtn>
        </RestoreBubble>
      </ChromeWindow>
      <ExplorerWindow />
      <Watermark>
        <WmWord $w={70}>ANY</WmWord>
        <S w={58} h={62}>
          <path d="M8 8v46l38-23z" fill="none" stroke="#e6e6e6" strokeWidth="3" />
          <path d="M2 6v50l8 4M10 2l44 29-44 29" fill="none" stroke="#ececec" strokeWidth="3" />
          <path d="M17 20v22l17-11z" fill="none" stroke="#ececec" strokeWidth="2" />
        </S>
        <WmWord $w={60} $lead={4}>RUN</WmWord>
      </Watermark>
      <Taskbar>
        <StartBtn>
          <S>
            <path d="M1 3l6-1v5.500H1zM8 2l7-1v6.500H8zM1 8.500h6V14l-6-1zM8 8.500h7V15l-7-1z" fill="#fff" />
          </S>
        </StartBtn>
        <TaskSearch>
          <S w={18} h={18}>
            <circle cx="11" cy="7" r="5.500" fill="none" stroke="#222" strokeWidth="1.200" />
            <path d="M7 11l-5.500 5.500" stroke="#222" strokeWidth="1.200" />
          </S>
          Type here to search
          <SearchArt>
            <S w={78} h={40}>
              <path d="M0 40c14-6 40-10 78-6v6z" fill="#9cbd74" />
              <path d="M8 30l5-10 5 10c1 6-10 6-10 0z" fill="#6b4a9c" />
              <path d="M28 16l4 4 4-4 2 8c0 7-10 9-12 0z" fill="#f3a818" />
              <path d="M42 4l5 5 5-5 3 12c0 12-16 12-17 0z" fill="#f5b21e" />
              <circle cx="62" cy="27" r="4" fill="#ed8f1f" />
              <path d="M33 30v8M47 22v16" stroke="#6aa84f" strokeWidth="2" />
            </S>
          </SearchArt>
        </TaskSearch>
        <TaskItem>
          <S w={18} h={18}>
            <path d="M1 2.500h11M1 15.500h11M3 6.500h8v5H3zM15.500 2.500v2M15.500 7v4M15.500 13v2" stroke="#fff" strokeWidth="1.100" fill="none" />
          </S>
        </TaskItem>
        <TaskItem>
          <S w={26} h={26}>
            <circle cx="13" cy="13" r="12" fill="#0c78c4" />
            <path d="M2 12C4 3 20 0 25 11c1 6-6 8-9 6 3-2 2-6-3-6-6 0-7 7-2 12C5 22 1 18 2 12z" fill="#36c5a0" />
          </S>
        </TaskItem>
        <TaskItem $active>
          <S w={24} h={22}>
            <path d="M2 3h7l2 2h11v15H2z" fill="#f7cf5a" />
            <rect x="2" y="7" width="20" height="13" fill="#fde18b" />
            <rect x="9" y="13" width="6" height="4" fill="#3d8fd0" />
          </S>
        </TaskItem>
        <TaskItem>
          <S w={26} h={28}>
            <circle cx="13" cy="16" r="11" fill="#ff7139" />
            <path d="M14 1c2 4 9 6 10 15-3-3-6-4-8-4-3-3-3-7-2-11z" fill="#ffcb2b" />
            <path d="M3 9c1-2 3-3 4-2l1 5z" fill="#ffa436" />
            <circle cx="13" cy="16" r="5.500" fill="#7542e5" />
            <path d="M9 14c3-3 7-2 9 0-3-1-6-1-9 0z" fill="#ff4f7c" />
          </S>
        </TaskItem>
        <TaskItem $running>
          <S w={26} h={28}>
            <path d="M9 3l13 2-3 20-15-4z" fill="#d8ebe6" />
            <path d="M4 21L9 3l3 1-4 18z" fill="#3f8c9e" />
            <path d="M10 20l9 3 1-6z" fill="#8fc2bd" />
          </S>
        </TaskItem>
        <TaskItem $running>
          <S w={24} h={28}>
            <rect x="3" y="1" width="18" height="12" fill="#e6e6e6" stroke="#999" />
            <path d="M6 4.500h5M6 7.500h9" stroke="#b45a5f" />
            <rect x="2" y="13" width="20" height="13" rx="2" fill="#c8232a" />
            <path d="M8 13v-2h8v2M2 19h20" stroke="#7a1015" fill="none" />
          </S>
        </TaskItem>
        <TaskItem $running>
          <ChromeLogo size={25} />
        </TaskItem>
        <Tray>
          <TrayIcons>
            <TrayChevron>
              <Chevron dir="u" color="#fff" size={14} />
            </TrayChevron>
            <S w={14} h={16} vb="0 0 16 18">
              <rect x="2.500" y="5.500" width="8" height="7" rx="1" fill="none" stroke="#fff" />
              <path d="M11 8l4-2v6l-4-2M4 2.500h5M4 15.500h5" fill="none" stroke="#fff" />
            </S>
            <S w={18} h={16}>
              <path d="M6 2.500h11v9H6M1.500 4.500h5v6h-5zM11.500 11.500v3M7 14.500h9" fill="none" stroke="#fff" />
            </S>
            <S w={18} h={16}>
              <path d="M1 6h3l4-4v12l-4-4H1zM11 5c1 2 1 4 0 6M13.500 3c2 3 2 7 0 10" fill="none" stroke="#fff" />
            </S>
          </TrayIcons>
          <Clock>
            <div>11:35 PM</div>
            <div>6/22/2025</div>
          </Clock>
          <Notify>
            <S w={16} h={16}>
              <path d="M1 2h14v10H10l-2 2-2-2H1z" fill="none" stroke="#fff" />
            </S>
          </Notify>
        </Tray>
      </Taskbar>
    </Desktop>
  );
}
